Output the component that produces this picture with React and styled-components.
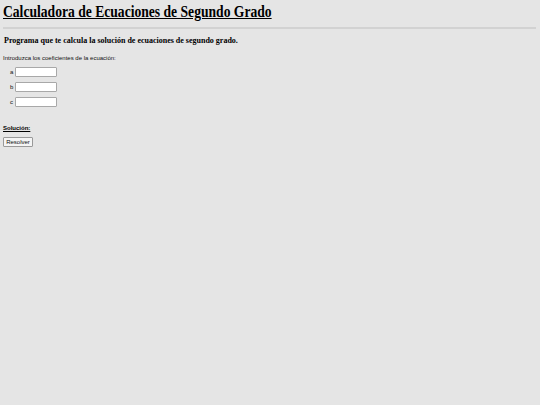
import React from "react";
import styled, { createGlobalStyle } from "styled-components";

const GlobalStyle = createGlobalStyle`
  html, body {
    margin: 0;
    padding: 0;
    background: #e5e5e5;
  }
  body {
    min-height: 405px;
    font-family: "Liberation Sans", Arial, sans-serif;
  }
`;

const Page = styled.div`
  padding: 2px 4px 0 3px;
`;

const Title = styled.h1`
  margin: 0;
  display: inline-block;
  white-space: nowrap;
  transform: scaleX(0.85);
  transform-origin: left center;
  font-family: "Liberation Serif", "Times New Roman", serif;
  font-size: 16px;
  line-height: 20px;
  font-weight: bold;
  text-decoration: underline;
  color: #000;
`;

const Rule = styled.hr`
  margin: 5px 0 0 0;
  border: none;
  height: 2px;
  background: #d2d2d2;
`;

const Subtitle = styled.h2`
  margin: 6px 0 0 1px;
  font-family: "Liberation Serif", "Times New Roman", serif;
  font-size: 8px;
  line-height: 12px;
  font-weight: bold;
  color: #000;
`;

const Intro = styled.p`
  margin: 6px 0 0 0;
  font-size: 6px;
  line-height: 10px;
  color: #111;
`;

const Fields = styled.div`
  display: flex;
  flex-direction: column;
  gap: 5px;
  margin-top: 4px;
  padding-left: 7px;
`;

const Row = styled.label`
  display: flex;
  align-items: center;
  gap: 2px;
  font-size: 6px;
  color: #111;
`;

const Input = styled.input`
  box-sizing: border-box;
  width: 42px;
  height: 10px;
  margin: 0;
  padding: 0 2px;
  border: 1px solid #a8a8a8;
  border-radius: 1px;
  background: #fff;
  font-size: 6px;
`;

const Solution = styled.p`
  margin: 16px 0 0 0;
  font-size: 6px;
  line-height: 10px;
  font-weight: bold;
  text-decoration: underline;
  color: #000;
`;

const Button = styled.button`
  display: block;
  margin-top: 4px;
  width: 30px;
  height: 10px;
  padding: 0;
  border: 1px solid #999;
  border-radius: 1px;
  background: #f4f4f4;
  font-family: "Liberation Sans", Arial, sans-serif;
  font-size: 6px;
  font-weight: normal;
  line-height: 8px;
  color: #111;
`;

const fields = ["a", "b", "c"];

export default function App() {
  return (
    <>
      <GlobalStyle />
      <Page>
        <Title>Calculadora de Ecuaciones de Segundo Grado</Title>
        <Rule />
        <Subtitle>Programa que te calcula la solución de ecuaciones de segundo grado.</Subtitle>
        <Intro>Introduzca los coeficientes de la ecuación:</Intro>
        <Fields>
          {fields.map((name) => (
            <Row key={name}>
              {name}
              <Input type="text" name={name} />
            </Row>
          ))}
        </Fields>
        <Solution>Solución:</Solution>
        <Button type="button">Resolver</Button>
      </Page>
    </>
  );
}
